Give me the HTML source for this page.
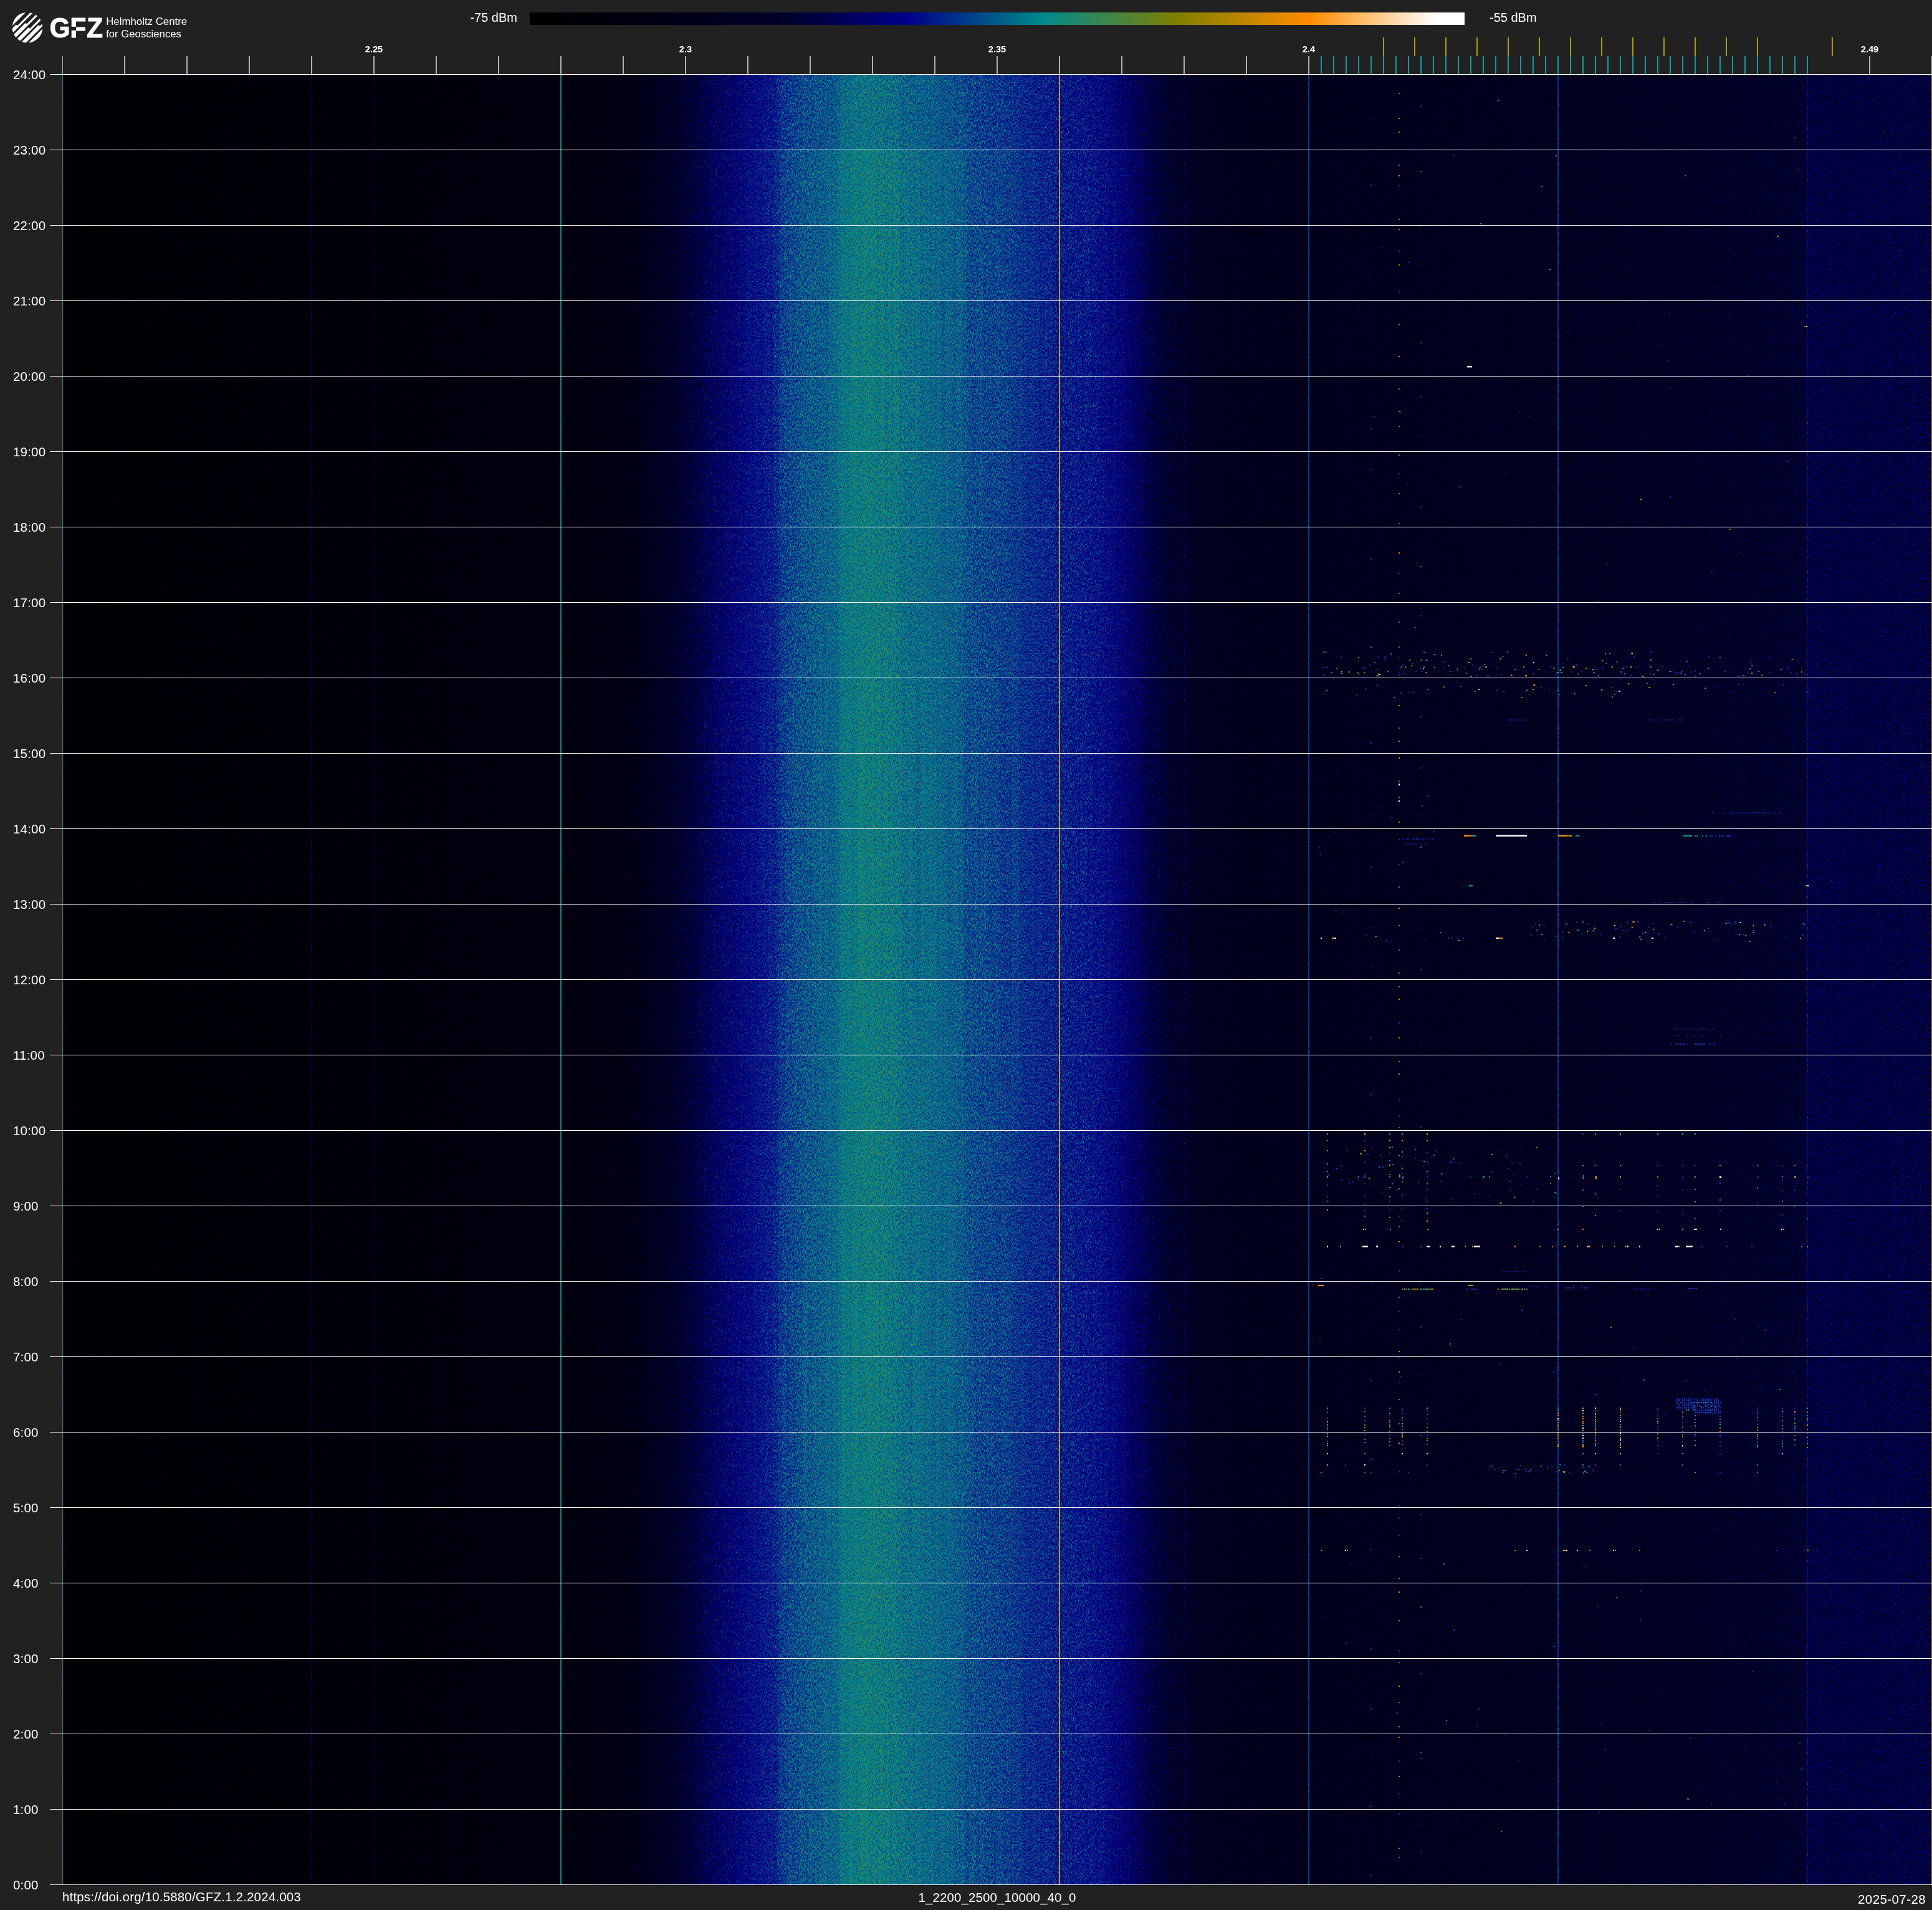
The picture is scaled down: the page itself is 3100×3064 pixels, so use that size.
<!DOCTYPE html>
<html lang="en"><head><meta charset="utf-8"><title>Spectrogram 2025-07-28</title>
<style>
html,body{margin:0;padding:0;background:#212121;}
body{width:3100px;height:3064px;position:relative;overflow:hidden;font-family:"Liberation Sans",sans-serif;color:#fff;}
.abs{position:absolute;}
.g{will-change:transform;}
.tl{will-change:transform;position:absolute;left:20.6px;font-size:20.5px;letter-spacing:0.2px;line-height:24px;height:24px;white-space:nowrap;}
.fl{will-change:transform;position:absolute;font-size:14.6px;font-weight:bold;line-height:16px;width:80px;text-align:center;top:70.7px;}
.hl{position:absolute;left:80px;width:3020px;height:1.5px;background:#fff;}
</style></head><body>
<svg class="abs g" style="left:0;top:0" width="320" height="90" viewBox="0 0 320 90">
<defs><clipPath id="lc"><circle cx="44" cy="44.1" r="24.4"/></clipPath></defs>
<g clip-path="url(#lc)" fill="#fff">
<path d="M0 0H60.99L0 60.99Z"/>
<path d="M-34.86 100.00 L25.62 39.52 L27.34 40.90 L28.45 40.49 L68.94 0.00 L73.30 0.00 L-26.70 100.00Z"/>
<path d="M-22.55 100.00 L40.39 37.06 L42.42 38.13 L43.85 37.40 L81.25 0.00 L85.61 0.00 L-14.39 100.00Z"/>
<path d="M-10.24 100.00 L45.42 44.34 L47.44 45.41 L48.87 44.69 L93.56 0.00 L97.92 0.00 L-2.08 100.00Z"/>
<path d="M2.07 100.00 L61.75 40.32 L63.62 41.55 L64.90 40.97 L105.87 0.00 L110.23 0.00 L10.23 100.00Z"/>
<path d="M14.38 100L100 14.38V100Z"/>
</g>
<text transform="translate(0,60.3) scale(0.915,0.9765)" x="87.2 123.1 152.3" y="0" font-family="Liberation Sans,sans-serif" font-weight="bold" font-size="46" fill="#fff" stroke="#fff" stroke-width="1.2">GFZ</text>
<rect x="113" y="42.9" width="9.0" height="5.9" fill="#212121"/>
<text x="170.2" y="40.4" font-family="Liberation Sans,sans-serif" font-size="16.5" fill="#fff" textLength="130" lengthAdjust="spacingAndGlyphs">Helmholtz Centre</text>
<text x="170.2" y="60" font-family="Liberation Sans,sans-serif" font-size="16.5" fill="#fff" textLength="120.7" lengthAdjust="spacingAndGlyphs">for Geosciences</text>
</svg>
<div class="abs" style="left:850px;top:20px;width:1500px;height:20px;background:linear-gradient(to right,rgb(0,0,0) 0.0%,rgb(0,0,40) 27.0%,rgb(0,0,139) 40.5%,rgb(0,139,139) 55.0%,rgb(128,128,0) 69.3%,rgb(255,140,0) 83.5%,rgb(255,255,255) 97.0%,rgb(255,255,255) 100.0%)"></div>
<div class="abs g" style="left:700px;top:16px;width:130px;text-align:right;font-size:20px;line-height:24px">-75 dBm</div>
<div class="abs g" style="left:2390px;top:16px;font-size:20px;line-height:24px">-55 dBm</div>
<div class="fl" style="left:560px">2.25</div>
<div class="fl" style="left:1060px">2.3</div>
<div class="fl" style="left:1560px">2.35</div>
<div class="fl" style="left:2060px">2.4</div>
<div class="fl" style="left:2960px">2.49</div>
<svg class="abs" style="left:100px;top:55px" width="3000" height="66" viewBox="100 55 3000 66">
<g stroke="#b0b0b0" stroke-width="2">
<path d="M100 90V119"/><path d="M200 90V119"/><path d="M300 90V119"/><path d="M400 90V119"/><path d="M500 90V119"/><path d="M600 90V119"/><path d="M700 90V119"/><path d="M800 90V119"/><path d="M900 90V119"/><path d="M1000 90V119"/><path d="M1100 90V119"/><path d="M1200 90V119"/><path d="M1300 90V119"/><path d="M1400 90V119"/><path d="M1500 90V119"/><path d="M1600 90V119"/><path d="M1700 90V119"/><path d="M1800 90V119"/><path d="M1900 90V119"/><path d="M2000 90V119"/><path d="M2100 90V119"/><path d="M2200 90V119"/><path d="M2300 90V119"/><path d="M2400 90V119"/><path d="M2500 90V119"/><path d="M2600 90V119"/><path d="M2700 90V119"/><path d="M2800 90V119"/><path d="M2900 90V119"/><path d="M3000 90V119"/><path d="M3100 90V119"/></g>
<g stroke="#0f9ba0" stroke-width="2">
<path d="M2120 90V119"/><path d="M2140 90V119"/><path d="M2160 90V119"/><path d="M2180 90V119"/><path d="M2200 90V119"/><path d="M2220 90V119"/><path d="M2240 90V119"/><path d="M2260 90V119"/><path d="M2280 90V119"/><path d="M2300 90V119"/><path d="M2320 90V119"/><path d="M2340 90V119"/><path d="M2360 90V119"/><path d="M2380 90V119"/><path d="M2400 90V119"/><path d="M2420 90V119"/><path d="M2440 90V119"/><path d="M2460 90V119"/><path d="M2480 90V119"/><path d="M2500 90V119"/><path d="M2520 90V119"/><path d="M2540 90V119"/><path d="M2560 90V119"/><path d="M2580 90V119"/><path d="M2600 90V119"/><path d="M2620 90V119"/><path d="M2640 90V119"/><path d="M2660 90V119"/><path d="M2680 90V119"/><path d="M2700 90V119"/><path d="M2720 90V119"/><path d="M2740 90V119"/><path d="M2760 90V119"/><path d="M2780 90V119"/><path d="M2800 90V119"/><path d="M2820 90V119"/><path d="M2840 90V119"/><path d="M2860 90V119"/><path d="M2880 90V119"/><path d="M2900 90V119"/></g>
<g stroke="#a59e0a" stroke-width="2">
<path d="M2220 60V90"/><path d="M2270 60V90"/><path d="M2320 60V90"/><path d="M2370 60V90"/><path d="M2420 60V90"/><path d="M2470 60V90"/><path d="M2520 60V90"/><path d="M2570 60V90"/><path d="M2620 60V90"/><path d="M2670 60V90"/><path d="M2720 60V90"/><path d="M2770 60V90"/><path d="M2820 60V90"/><path d="M2940 60V90"/></g></svg>
<svg class="abs" style="left:100px;top:120px" width="3000" height="2904" viewBox="0 0 3000 2904">
<defs>
<linearGradient id="pg" x1="0" y1="0" x2="3000" y2="0" gradientUnits="userSpaceOnUse" color-interpolation="sRGB">
<stop offset="0.00000" stop-color="rgb(8,8,8)"/><stop offset="0.06667" stop-color="rgb(13,13,13)"/><stop offset="0.13333" stop-color="rgb(18,18,18)"/><stop offset="0.20000" stop-color="rgb(23,23,23)"/><stop offset="0.26667" stop-color="rgb(28,28,28)"/><stop offset="0.28333" stop-color="rgb(31,31,31)"/><stop offset="0.30000" stop-color="rgb(36,36,36)"/><stop offset="0.31667" stop-color="rgb(52,52,52)"/><stop offset="0.33333" stop-color="rgb(71,71,71)"/><stop offset="0.35000" stop-color="rgb(89,89,89)"/><stop offset="0.36667" stop-color="rgb(102,102,102)"/><stop offset="0.38167" stop-color="rgb(112,112,112)"/><stop offset="0.38433" stop-color="rgb(119,119,119)"/><stop offset="0.39667" stop-color="rgb(126,126,126)"/><stop offset="0.41433" stop-color="rgb(132,132,132)"/><stop offset="0.41667" stop-color="rgb(137,137,137)"/><stop offset="0.43000" stop-color="rgb(141,141,141)"/><stop offset="0.44667" stop-color="rgb(138,138,138)"/><stop offset="0.44900" stop-color="rgb(135,135,135)"/><stop offset="0.46667" stop-color="rgb(132,132,132)"/><stop offset="0.48167" stop-color="rgb(128,128,128)"/><stop offset="0.48300" stop-color="rgb(125,125,125)"/><stop offset="0.50000" stop-color="rgb(121,121,121)"/><stop offset="0.51233" stop-color="rgb(118,118,118)"/><stop offset="0.51367" stop-color="rgb(116,116,116)"/><stop offset="0.53333" stop-color="rgb(111,111,111)"/><stop offset="0.55000" stop-color="rgb(107,107,107)"/><stop offset="0.55833" stop-color="rgb(103,103,103)"/><stop offset="0.56667" stop-color="rgb(96,96,96)"/><stop offset="0.57500" stop-color="rgb(87,87,87)"/><stop offset="0.58333" stop-color="rgb(76,76,76)"/><stop offset="0.59167" stop-color="rgb(68,68,68)"/><stop offset="0.60000" stop-color="rgb(60,60,60)"/><stop offset="0.61667" stop-color="rgb(52,52,52)"/><stop offset="0.63333" stop-color="rgb(48,48,48)"/><stop offset="0.66667" stop-color="rgb(48,48,48)"/><stop offset="0.73333" stop-color="rgb(51,51,51)"/><stop offset="0.80000" stop-color="rgb(54,54,54)"/><stop offset="0.86667" stop-color="rgb(59,59,59)"/><stop offset="0.91667" stop-color="rgb(66,66,66)"/><stop offset="0.93300" stop-color="rgb(67,67,67)"/><stop offset="0.93367" stop-color="rgb(77,77,77)"/><stop offset="1.00000" stop-color="rgb(77,77,77)"/>
</linearGradient>
<filter id="sf" x="0" y="0" width="3000" height="2904" filterUnits="userSpaceOnUse" color-interpolation-filters="sRGB">
<feTurbulence type="fractalNoise" baseFrequency="1.37 0.36" numOctaves="1" seed="7" result="t"/>
<feColorMatrix in="t" type="matrix" values="1 0 0 0 0 1 0 0 0 0 1 0 0 0 0 0 0 0 0 1" result="n0"/>
<feComponentTransfer in="n0" result="n"><feFuncR type="gamma" exponent="2"/><feFuncG type="gamma" exponent="2"/><feFuncB type="gamma" exponent="2"/></feComponentTransfer>
<feComposite in="SourceGraphic" in2="n" operator="arithmetic" k1="0" k2="1" k3="0.360" k4="-0.0939" result="s1"/>
<feTurbulence type="fractalNoise" baseFrequency="0.47 0.0012" numOctaves="1" seed="11" result="u"/>
<feColorMatrix in="u" type="matrix" values="1 0 0 0 0 1 0 0 0 0 1 0 0 0 0 0 0 0 0 1" result="u1"/>
<feComposite in="s1" in2="u1" operator="arithmetic" k1="0" k2="1" k3="0.050" k4="-0.0250" result="s"/>
<feComponentTransfer in="s"><feFuncR type="table" tableValues="0.0000 0.0000 0.0000 0.0000 0.0000 0.0000 0.0000 0.0000 0.0000 0.0000 0.0000 0.0000 0.0000 0.0000 0.0000 0.0000 0.0000 0.0000 0.0000 0.0000 0.0000 0.0000 0.0000 0.0878 0.1755 0.2633 0.3510 0.4388 0.5265 0.6142 0.7019 0.7896 0.8772 0.9649 1.0000 1.0000 1.0000 1.0000 1.0000 1.0000 1.0000"/><feFuncG type="table" tableValues="0.0000 0.0000 0.0000 0.0000 0.0000 0.0000 0.0000 0.0000 0.0000 0.0000 0.0000 0.0000 0.0000 0.0000 0.0000 0.0000 0.0000 0.0752 0.1692 0.2632 0.3571 0.4511 0.5451 0.5376 0.5300 0.5225 0.5149 0.5074 0.5043 0.5126 0.5209 0.5291 0.5374 0.5457 0.5991 0.6826 0.7662 0.8497 0.9332 1.0000 1.0000"/><feFuncB type="table" tableValues="0.0000 0.0145 0.0290 0.0436 0.0581 0.0726 0.0871 0.1017 0.1162 0.1307 0.1452 0.1712 0.2431 0.3150 0.3869 0.4588 0.5307 0.5451 0.5451 0.5451 0.5451 0.5451 0.5451 0.4498 0.3545 0.2592 0.1639 0.0686 0.0000 0.0000 0.0000 0.0000 0.0000 0.0000 0.1111 0.2963 0.4815 0.6667 0.8519 1.0000 1.0000"/></feComponentTransfer>
</filter>
</defs>
<g filter="url(#sf)"><rect x="0" y="0" width="3000" height="2904" fill="url(#pg)"/>
<rect x="0" y="0" width="3000" height="120" fill="#000" opacity="0.022"/>
<rect x="-1.0" y="0" width="2.0" height="2904" fill="rgb(145,145,145)" opacity="1.00"/>
<rect x="399.3" y="0" width="1.4" height="2904" fill="rgb(102,102,102)" opacity="1.00"/>
<rect x="499.3" y="0" width="1.4" height="2904" fill="rgb(76,76,76)" opacity="1.00"/>
<rect x="799.0" y="0" width="2.0" height="2904" fill="rgb(144,144,144)" opacity="1.00"/>
<rect x="1599.0" y="0" width="1.9" height="2904" fill="rgb(204,204,204)" opacity="1.00"/>
<rect x="1799.5" y="0" width="1.0" height="2904" fill="rgb(102,102,102)" opacity="1.00"/>
<rect x="1999.0" y="0" width="2.0" height="2904" fill="rgb(120,120,120)" opacity="1.00"/>
<rect x="2399.0" y="0" width="2.0" height="2904" fill="rgb(119,119,119)" opacity="1.00"/>
<rect x="2799.2" y="0" width="1.6" height="2904" fill="rgb(105,105,105)" opacity="1.00"/>
<rect x="2999.0" y="0" width="2.0" height="2904" fill="rgb(184,184,184)" opacity="1.00"/>
</g>
<rect x="-1.00" y="0" width="2.0" height="2904" fill="rgb(17,137,119)" opacity="0.70"/>
<rect x="799.00" y="0" width="2.0" height="2904" fill="rgb(17,137,119)" opacity="0.70"/>
<rect x="1599.05" y="0" width="1.9" height="2904" fill="rgb(223,137,0)" opacity="0.70"/>
<rect x="1999.00" y="0" width="2.0" height="2904" fill="rgb(0,62,139)" opacity="0.45"/>
<rect x="2399.00" y="0" width="2.0" height="2904" fill="rgb(0,57,139)" opacity="0.45"/>
<rect x="2300.0" y="1219.5" width="50.0" height="2.4" fill="#ffffff"/><rect x="2249.0" y="1219.5" width="9.0" height="2.4" fill="#ff8a10"/><rect x="2258.0" y="1219.5" width="5.0" height="2.4" fill="#9a9212"/><rect x="2263.0" y="1219.5" width="6.0" height="2.4" fill="#0f9494"/><rect x="2400.0" y="1219.5" width="14.0" height="2.4" fill="#ff8a10"/><rect x="2414.0" y="1219.5" width="9.0" height="2.4" fill="#9a9212"/><rect x="2428.0" y="1219.5" width="6.0" height="2.4" fill="#0f9494"/><rect x="2601.0" y="1219.5" width="12.0" height="2.4" fill="#0f9494"/><rect x="2144.0" y="1137.0" width="2.0" height="3.0" fill="#ffffff"/><rect x="2029.0" y="1698.0" width="2.0" height="3.0" fill="#0f9494"/><rect x="2089.0" y="1698.0" width="2.0" height="3.0" fill="#ff8a10"/><rect x="2129.0" y="1698.0" width="2.0" height="3.0" fill="#0f9494"/><rect x="2149.0" y="1698.0" width="2.0" height="3.0" fill="#0f9494"/><rect x="2189.0" y="1698.0" width="2.0" height="3.0" fill="#9a9212"/><rect x="2439.0" y="1698.0" width="2.0" height="3.0" fill="#1634b4"/><rect x="2459.0" y="1698.0" width="2.0" height="3.0" fill="#0f9494"/><rect x="2499.0" y="1698.0" width="2.0" height="3.0" fill="#9a9212"/><rect x="2559.0" y="1698.0" width="2.0" height="3.0" fill="#0f9494"/><rect x="2599.0" y="1698.0" width="2.0" height="3.0" fill="#0f9494"/><rect x="2619.0" y="1698.0" width="2.0" height="3.0" fill="#0f9494"/><rect x="2089.0" y="1767.0" width="2.0" height="3.0" fill="#1634b4"/><rect x="2499.0" y="1767.0" width="2.0" height="3.0" fill="#9a9212"/><rect x="2619.0" y="1767.0" width="2.0" height="3.0" fill="#0f9494"/><rect x="2659.0" y="1767.0" width="3.0" height="3.0" fill="#ffffff"/><rect x="2779.0" y="1767.0" width="3.0" height="3.0" fill="#9a9212"/><rect x="2799.0" y="1767.0" width="3.0" height="3.0" fill="#1634b4"/><rect x="2279.0" y="1767.0" width="3.0" height="3.0" fill="#0f9494"/><rect x="2400.0" y="1768.0" width="2.0" height="4.0" fill="#ffffff"/><rect x="2460.0" y="1767.0" width="2.0" height="5.0" fill="#ff8a10"/><rect x="2440.0" y="1765.0" width="2.0" height="6.0" fill="#0f9494"/><rect x="2145.0" y="1764.0" width="2.0" height="5.0" fill="#9a9212"/><rect x="2150.0" y="1766.0" width="2.0" height="5.0" fill="#0f9494"/><rect x="2029.0" y="1878.5" width="2.0" height="2.4" fill="#ffffff"/><rect x="2050.0" y="1878.5" width="2.0" height="2.4" fill="#9a9212"/><rect x="2086.0" y="1878.5" width="9.0" height="2.4" fill="#ffffff"/><rect x="2108.0" y="1878.5" width="3.0" height="2.4" fill="#ffffff"/><rect x="2150.0" y="1878.5" width="2.0" height="2.4" fill="#1634b4"/><rect x="2189.0" y="1878.5" width="6.0" height="2.4" fill="#ffffff"/><rect x="2210.0" y="1878.5" width="2.0" height="2.4" fill="#ffffff"/><rect x="2229.0" y="1878.5" width="5.0" height="2.4" fill="#ffffff"/><rect x="2250.0" y="1878.5" width="2.0" height="2.4" fill="#9a9212"/><rect x="2262.0" y="1878.5" width="2.0" height="2.4" fill="#ff8a10"/><rect x="2265.0" y="1878.5" width="10.0" height="2.4" fill="#ffffff"/><rect x="2330.0" y="1878.5" width="2.0" height="2.4" fill="#ff8a10"/><rect x="2370.0" y="1878.5" width="2.0" height="2.4" fill="#9a9212"/><rect x="2390.0" y="1878.5" width="2.0" height="2.4" fill="#9a9212"/><rect x="2409.0" y="1878.5" width="3.0" height="2.4" fill="#ff8a10"/><rect x="2430.0" y="1878.5" width="2.0" height="2.4" fill="#9a9212"/><rect x="2447.0" y="1878.5" width="2.0" height="2.4" fill="#ffffff"/><rect x="2450.0" y="1878.5" width="2.0" height="2.4" fill="#ff8a10"/><rect x="2470.0" y="1878.5" width="2.0" height="2.4" fill="#9a9212"/><rect x="2490.0" y="1878.5" width="2.0" height="2.4" fill="#9a9212"/><rect x="2507.0" y="1878.5" width="2.0" height="2.4" fill="#ff8a10"/><rect x="2510.0" y="1878.5" width="3.0" height="2.4" fill="#ffffff"/><rect x="2530.0" y="1878.5" width="2.0" height="2.4" fill="#ffffff"/><rect x="2588.0" y="1878.5" width="5.0" height="2.4" fill="#ffffff"/><rect x="2593.0" y="1878.5" width="2.0" height="2.4" fill="#ff8a10"/><rect x="2605.0" y="1878.5" width="11.0" height="2.4" fill="#ffffff"/><rect x="2630.0" y="1878.5" width="2.0" height="2.4" fill="#1634b4"/><rect x="2670.0" y="1878.5" width="2.0" height="2.4" fill="#1634b4"/><rect x="2710.0" y="1878.5" width="2.0" height="2.4" fill="#1634b4"/><rect x="2790.0" y="1878.5" width="2.0" height="2.4" fill="#0f9494"/><rect x="2799.0" y="1878.5" width="2.0" height="2.4" fill="#9a9212"/><rect x="2254.0" y="467.0" width="8.0" height="2.4" fill="#ffffff"/><path stroke="#ffffff" stroke-width="1.8" fill="none" d="M2424.3 949.0h2.0M2517.7 928.0h2.0M2360.0 943.0h2.0M2112.8 962.0h2.0M2272.3 986.0h2.0M2497.3 989.0h2.0M2144.0 1165.0h2.0M2800.0 1301.0h2.0M2489.9 1365.0h2.0M2691.6 1360.0h2.0M2019.0 1385.0h2.0M2041.0 1385.0h3.0M2300.0 1385.0h5.0M2488.0 1385.0h3.0M2550.0 1385.0h3.0M2087.0 1852.0h2.0M2559.0 1852.0h2.0M2618.0 1852.0h5.0M2660.0 1852.0h2.0M2758.0 1852.0h2.0M2399.0 2156.0h2.0M2439.0 2143.0h2.0M2439.0 2171.0h2.0M2439.0 2183.0h2.0M2439.0 2187.0h2.0M2459.0 2139.0h2.0M2499.0 2160.0h2.0M2499.0 2179.0h2.0M2499.0 2190.0h2.0M2499.0 2202.0h2.0M2459.0 2199.0h2.0M2599.0 2199.0h2.0M2619.0 2199.0h2.0M2029.0 2212.0h2.0M2149.0 2212.0h2.0M2189.0 2212.0h2.0M2459.0 2212.0h2.0M2499.0 2212.0h2.0M2759.0 2212.0h2.0M2089.0 2230.0h2.0M2058.0 2367.0h2.0M2349.0 2367.0h2.0M2413.0 2367.0h2.0M2430.0 2367.0h2.0M2488.0 2367.0h2.0M2798.0 404.0h2.0"/>
<path stroke="#ff8a10" stroke-width="1.8" fill="none" d="M2144.0 70.0h2.0M2144.0 162.0h2.0M2144.0 452.0h2.0M2144.0 767.0h2.0M2144.0 1012.0h2.0M2144.0 1096.0h2.0M2144.0 1337.0h2.0M2144.0 1483.0h2.0M2144.0 1872.0h2.0M2144.0 2048.0h2.0M2144.0 2195.0h2.0M2144.0 2434.0h2.0M2144.0 2585.0h2.0M2144.0 2667.0h2.0M2516.2 950.0h2.0M2347.8 931.0h2.0M2535.2 965.0h2.0M2324.5 963.0h2.0M2187.5 959.0h2.0M2259.6 965.0h2.0M2346.9 964.0h3.0M2485.8 950.0h2.0M2710.0 960.0h2.0M2423.5 950.0h3.0M2238.0 953.0h2.0M2512.4 977.0h2.0M2469.2 987.0h2.0M2360.4 979.0h3.0M2359.2 986.0h2.0M2446.2 1374.0h2.0M2552.2 1371.0h2.0M2730.4 1364.0h2.0M2517.8 1368.0h2.0M2416.5 1376.0h2.0M2712.5 1365.0h2.0M2519.3 1359.0h2.0M2037.0 1385.0h3.0M2305.0 1385.0h6.0M2029.0 1821.0h2.0M2089.0 1726.0h2.0M2129.0 1710.0h2.0M2129.0 1721.0h2.0M2129.0 1749.0h2.0M2149.0 1710.0h2.0M2189.0 1839.0h2.0M2090.0 1852.0h2.0M2190.0 1852.0h2.0M2399.0 1852.0h2.0M2439.0 1852.0h2.0M2562.0 1852.0h2.0M2599.0 1852.0h2.0M2761.0 1852.0h2.0M2015.0 1942.0h9.0M2029.0 2161.0h2.0M2029.0 2184.0h2.0M2129.0 2159.0h2.0M2149.0 2164.0h2.0M2149.0 2185.0h2.0M2399.0 2147.0h2.0M2399.0 2151.0h2.0M2399.0 2162.0h2.0M2399.0 2173.0h2.0M2399.0 2178.0h2.0M2399.0 2188.0h2.0M2399.0 2197.0h2.0M2399.0 2200.0h2.0M2439.0 2139.0h2.0M2439.0 2156.0h2.0M2439.0 2161.0h2.0M2439.0 2164.0h2.0M2439.0 2175.0h2.0M2439.0 2201.0h2.0M2459.0 2149.0h2.0M2459.0 2157.0h2.0M2459.0 2160.0h2.0M2459.0 2172.0h2.0M2459.0 2175.0h2.0M2499.0 2139.0h2.0M2499.0 2142.0h2.0M2499.0 2169.0h2.0M2499.0 2183.0h2.0M2499.0 2198.0h2.0M2559.0 2160.0h2.0M2659.0 2177.0h2.0M2759.0 2144.0h2.0M2779.0 2145.0h2.0M2799.0 2166.0h2.0M2439.0 2199.0h2.0M2499.0 2199.0h2.0M2599.0 2212.0h2.0M2029.0 2230.0h2.0M2408.0 2367.0h5.0M2491.0 2367.0h2.0"/>
<path stroke="#9a9212" stroke-width="1.8" fill="none" d="M2144.0 92.0h2.0M2144.0 232.0h2.0M2144.0 248.0h2.0M2144.0 305.0h2.0M2144.0 540.0h2.0M2144.0 564.0h2.0M2144.0 672.0h2.0M2144.0 1069.0h2.0M2144.0 1159.0h2.0M2144.0 1199.0h2.0M2144.0 1365.0h2.0M2144.0 1463.0h2.0M2144.0 1545.0h2.0M2144.0 1583.0h2.0M2144.0 1603.0h2.0M2144.0 1734.0h2.0M2144.0 1787.0h2.0M2144.0 2081.0h2.0M2144.0 2377.0h2.0M2144.0 2412.0h2.0M2144.0 2480.0h2.0M2144.0 2650.0h2.0M2144.0 2730.0h2.0M2144.0 2845.0h2.0M2255.9 943.0h3.0M2774.8 938.0h2.0M2380.6 931.0h2.0M2161.3 939.0h2.0M2201.1 930.0h2.0M2547.2 939.0h3.0M2164.4 948.0h2.0M2443.9 952.0h2.0M2470.2 940.0h2.0M2079.2 935.0h2.0M2023.5 926.0h2.0M2282.8 950.0h3.0M2126.2 957.0h2.0M2088.5 959.0h2.0M2200.9 951.0h2.0M2456.6 959.0h2.0M2402.4 955.0h3.0M2154.2 950.0h2.0M2392.4 952.0h2.0M2343.8 950.0h2.0M2110.7 961.0h2.0M2051.1 960.0h3.0M2063.7 958.0h2.0M2052.0 957.0h2.0M2110.5 964.0h2.0M2790.0 958.0h2.0M2747.3 991.0h2.0M2545.3 983.0h3.0M2215.7 982.0h2.0M2583.9 978.0h2.0M2341.0 999.0h2.0M2443.6 980.0h3.0M2797.0 1301.0h2.0M2369.3 1364.0h2.0M2633.9 1373.0h2.0M2539.5 1376.0h2.0M2521.6 1359.0h2.0M2601.1 1358.0h2.0M2706.8 1390.0h2.0M2700.3 1381.0h2.0M2788.0 1385.0h2.0M2029.0 1726.0h2.0M2129.0 1785.0h2.0M2129.0 1800.0h2.0M2129.0 1833.0h2.0M2149.0 1728.0h2.0M2149.0 1754.0h2.0M2189.0 1710.0h2.0M2189.0 1826.0h2.0M2439.0 1750.0h2.0M2439.0 1815.0h2.0M2459.0 1768.0h2.0M2459.0 1830.0h2.0M2499.0 1750.0h2.0M2619.0 1788.0h2.0M2619.0 1808.0h2.0M2659.0 1750.0h2.0M2365.0 1721.0h2.0M2387.0 1778.0h2.0M2306.5 1810.0h3.0M2082.0 1731.0h3.0M2095.9 1770.0h2.0M2029.0 1768.0h2.0M2559.0 1768.0h2.0M2256.0 1942.0h8.0M2150.0 1948.0h2.0M2153.0 1948.0h2.0M2156.0 1948.0h2.0M2159.0 1948.0h2.0M2165.0 1948.0h2.0M2168.0 1948.0h2.0M2171.0 1948.0h2.0M2174.0 1948.0h2.0M2180.0 1948.0h2.0M2183.0 1948.0h2.0M2189.0 1948.0h2.0M2192.0 1948.0h2.0M2195.0 1948.0h2.0M2198.0 1948.0h2.0M2303.0 1948.0h2.0M2309.0 1948.0h2.0M2312.0 1948.0h2.0M2315.0 1948.0h2.0M2318.0 1948.0h2.0M2321.0 1948.0h2.0M2324.0 1948.0h2.0M2327.0 1948.0h2.0M2330.0 1948.0h2.0M2333.0 1948.0h2.0M2336.0 1948.0h2.0M2342.0 1948.0h2.0M2345.0 1948.0h2.0M2348.0 1948.0h2.0M2029.0 2139.0h2.0M2029.0 2166.0h2.0M2029.0 2171.0h2.0M2029.0 2196.0h2.0M2089.0 2166.0h2.0M2089.0 2170.0h2.0M2089.0 2175.0h2.0M2129.0 2147.0h2.0M2129.0 2169.0h2.0M2129.0 2193.0h2.0M2149.0 2168.0h2.0M2149.0 2182.0h2.0M2189.0 2139.0h2.0M2189.0 2170.0h2.0M2189.0 2188.0h2.0M2399.0 2166.0h2.0M2399.0 2169.0h2.0M2399.0 2181.0h2.0M2399.0 2184.0h2.0M2439.0 2147.0h2.0M2439.0 2152.0h2.0M2439.0 2167.0h2.0M2439.0 2197.0h2.0M2459.0 2153.0h2.0M2459.0 2179.0h2.0M2459.0 2183.0h2.0M2459.0 2191.0h2.0M2499.0 2151.0h2.0M2499.0 2154.0h2.0M2499.0 2157.0h2.0M2499.0 2187.0h2.0M2499.0 2195.0h2.0M2559.0 2180.0h2.0M2559.0 2187.0h2.0M2599.0 2185.0h2.0M2619.0 2167.0h2.0M2659.0 2171.0h2.0M2719.0 2170.0h2.0M2719.0 2174.0h2.0M2719.0 2181.0h2.0M2719.0 2184.0h2.0M2779.0 2163.0h2.0M2799.0 2173.0h2.0M2799.0 2186.0h2.0M2799.0 2202.0h2.0M2029.0 2199.0h2.0M2399.0 2199.0h2.0M2439.0 2212.0h2.0M2407.5 2241.0h3.0M2400.8 2239.0h2.0M2409.0 2242.0h2.0M2619.0 2242.0h2.0M2019.0 2367.0h2.0M2061.0 2367.0h2.0M2330.0 2367.0h2.0M2450.0 2367.0h2.0M2530.0 2367.0h2.0M2800.0 2367.0h2.0M2795.0 404.0h2.0M2531.7 681.0h3.0M2395.9 130.0h2.0M2674.8 729.0h2.0M2275.1 239.0h2.0M2751.0 259.0h3.0M2484.2 2009.0h2.0M2755.6 2109.0h2.0"/>
<path stroke="#38a878" stroke-width="1.8" fill="none" d="M2179.4 939.0h2.0M2212.1 931.0h2.0M2482.3 928.0h2.0M2184.1 950.0h2.0M2306.1 937.0h3.0M2183.0 953.0h2.0M2454.7 954.0h3.0M2726.4 963.0h2.0M2707.2 953.0h2.0M2035.5 959.0h2.0M2578.5 957.0h3.0M2398.2 959.0h3.0M2136.5 999.0h2.0M2635.4 984.0h2.0M2349.0 987.0h2.0M2400.4 994.0h2.0M2690.1 1379.0h2.0M2712.4 1376.0h2.0M2580.5 1363.0h3.0M2240.0 1389.0h3.0M2530.3 1383.0h2.0M2210.4 1376.0h2.0M2459.0 1768.0h2.0M2130.0 1852.0h2.0"/>
<path stroke="#0f9494" stroke-width="1.8" fill="none" d="M2144.0 30.0h2.0M2144.0 145.0h2.0M2144.0 401.0h2.0M2144.0 504.0h2.0M2144.0 610.0h2.0M2144.0 720.0h2.0M2144.0 832.0h2.0M2144.0 878.0h2.0M2144.0 918.0h2.0M2144.0 1048.0h2.0M2144.0 1133.0h2.0M2144.0 1303.0h2.0M2144.0 1404.0h2.0M2144.0 1441.0h2.0M2144.0 1689.0h2.0M2144.0 1848.0h2.0M2144.0 1961.0h2.0M2144.0 2125.0h2.0M2144.0 2164.0h2.0M2144.0 2547.0h2.0M2144.0 2611.0h2.0M2144.0 2860.0h2.0M2099.0 918.0h2.0M2179.0 155.0h2.0M2179.0 242.0h2.0M2179.0 789.0h2.0M2179.0 1239.0h2.0M2179.0 2458.0h2.0M2658.8 935.0h2.0M2475.0 929.0h2.0M2223.5 948.0h2.0M2184.6 927.0h2.0M2639.9 952.0h2.0M2605.6 941.0h2.0M2259.3 937.0h2.0M2105.4 943.0h2.0M2547.0 950.0h3.0M2273.8 951.0h2.0M2710.2 948.0h2.0M2318.3 926.0h2.0M2476.4 944.0h2.0M2280.8 946.0h2.0M2493.5 942.0h2.0M2131.1 929.0h2.0M2187.5 939.0h3.0M2310.3 933.0h2.0M2330.1 954.0h2.0M2558.6 955.0h3.0M2406.5 951.0h3.0M2696.9 964.0h2.0M2252.3 960.0h2.0M2504.4 952.0h2.0M2272.7 954.0h2.0M2721.2 957.0h2.0M2506.1 961.0h2.0M2043.9 952.0h2.0M2368.5 954.0h2.0M2603.2 962.0h2.0M2626.9 961.0h2.0M2552.3 962.0h2.0M2077.4 959.0h2.0M2596.8 960.0h2.0M2147.4 950.0h2.0M2431.7 961.0h2.0M2500.8 958.0h2.0M2404.2 959.0h3.0M2079.3 961.0h2.0M2108.4 964.0h2.0M2464.0 964.0h2.0M2756.8 954.0h2.0M2486.0 998.0h2.0M2243.4 981.0h2.0M2027.9 988.0h2.0M2266.1 989.0h2.0M2190.7 986.0h2.0M2489.7 994.0h2.0M2542.4 976.0h2.0M2425.5 993.0h2.0M2399.4 987.0h2.0M2613.0 1221.0h2.0M2619.0 1221.0h2.0M2622.0 1221.0h2.0M2631.0 1221.0h2.0M2637.0 1221.0h2.0M2257.0 1301.0h6.0M2372.1 1379.0h3.0M2430.7 1372.0h3.0M2365.4 1372.0h2.0M2668.4 1361.0h3.0M2438.9 1359.0h2.0M2457.7 1369.0h3.0M2713.1 1373.0h2.0M2412.5 1362.0h2.0M2792.6 1362.0h2.0M2456.0 1373.0h2.0M2531.6 1387.0h3.0M2106.1 1382.0h3.0M2029.0 1710.0h2.0M2029.0 1747.0h2.0M2029.0 1759.0h2.0M2029.0 1769.0h2.0M2089.0 1831.0h2.0M2129.0 1742.0h2.0M2129.0 1764.0h2.0M2149.0 1776.0h2.0M2189.0 1759.0h2.0M2189.0 1779.0h2.0M2439.0 1789.0h2.0M2459.0 1750.0h2.0M2459.0 1795.0h2.0M2619.0 1835.0h2.0M2659.0 1805.0h2.0M2719.0 1750.0h2.0M2719.0 1786.0h2.0M2759.0 1807.0h2.0M2779.0 1750.0h2.0M2170.4 1724.0h2.0M2387.2 1767.0h2.0M2328.9 1801.0h2.0M2231.5 1739.0h2.0M2183.8 1743.0h3.0M2134.1 1748.0h2.0M2112.5 1752.0h2.0M2394.3 1793.0h3.0M2132.9 1720.0h2.0M2133.4 1779.0h2.0M2292.3 1732.0h3.0M2212.4 1763.0h2.0M2029.5 1807.0h2.0M2200.2 1733.0h2.0M2129.0 1768.0h2.0M2439.0 1768.0h2.0M2759.0 1768.0h2.0M2079.0 1768.0h2.0M2289.0 1768.0h2.0M2160.0 1948.0h2.0M2178.0 1948.0h2.0M2184.0 1948.0h2.0M2187.0 1948.0h2.0M2196.0 1948.0h2.0M2313.0 1948.0h2.0M2316.0 1948.0h2.0M2325.0 1948.0h2.0M2334.0 1948.0h2.0M2340.0 1948.0h2.0M2349.0 1948.0h2.0M2029.0 2180.0h2.0M2089.0 2144.0h2.0M2089.0 2152.0h2.0M2089.0 2189.0h2.0M2089.0 2194.0h2.0M2129.0 2139.0h2.0M2129.0 2162.0h2.0M2129.0 2166.0h2.0M2129.0 2176.0h2.0M2129.0 2188.0h2.0M2149.0 2154.0h2.0M2149.0 2179.0h2.0M2149.0 2197.0h2.0M2189.0 2176.0h2.0M2189.0 2191.0h2.0M2399.0 2139.0h2.0M2399.0 2142.0h2.0M2399.0 2159.0h2.0M2399.0 2193.0h2.0M2439.0 2180.0h2.0M2439.0 2191.0h2.0M2439.0 2194.0h2.0M2459.0 2143.0h2.0M2459.0 2147.0h2.0M2459.0 2163.0h2.0M2459.0 2166.0h2.0M2459.0 2169.0h2.0M2459.0 2187.0h2.0M2459.0 2195.0h2.0M2459.0 2198.0h2.0M2499.0 2146.0h2.0M2499.0 2165.0h2.0M2499.0 2174.0h2.0M2559.0 2156.0h2.0M2559.0 2163.0h2.0M2599.0 2145.0h2.0M2599.0 2152.0h2.0M2599.0 2170.0h2.0M2599.0 2177.0h2.0M2599.0 2181.0h2.0M2599.0 2200.0h2.0M2619.0 2151.0h2.0M2619.0 2157.0h2.0M2619.0 2162.0h2.0M2619.0 2181.0h2.0M2619.0 2191.0h2.0M2659.0 2157.0h2.0M2659.0 2162.0h2.0M2659.0 2165.0h2.0M2719.0 2154.0h2.0M2719.0 2188.0h2.0M2719.0 2201.0h2.0M2759.0 2159.0h2.0M2759.0 2167.0h2.0M2759.0 2172.0h2.0M2759.0 2177.0h2.0M2759.0 2192.0h2.0M2759.0 2196.0h2.0M2759.0 2200.0h2.0M2779.0 2156.0h2.0M2779.0 2168.0h2.0M2779.0 2172.0h2.0M2779.0 2183.0h2.0M2779.0 2190.0h2.0M2799.0 2139.0h2.0M2799.0 2146.0h2.0M2799.0 2151.0h2.0M2799.0 2155.0h2.0M2799.0 2158.0h2.0M2799.0 2195.0h2.0M2612.0 2130.0h2.0M2615.0 2130.0h2.0M2621.0 2130.0h2.0M2624.0 2130.0h2.0M2633.0 2130.0h2.0M2636.0 2130.0h2.0M2639.0 2130.0h2.0M2645.0 2130.0h2.0M2618.0 2136.0h2.0M2627.0 2136.0h2.0M2636.0 2136.0h2.0M2645.0 2136.0h2.0M2651.0 2136.0h2.0M2657.0 2136.0h2.0M2605.0 2142.0h2.0M2608.0 2142.0h2.0M2617.0 2142.0h2.0M2632.0 2142.0h2.0M2635.0 2142.0h2.0M2641.0 2142.0h2.0M2644.0 2142.0h2.0M2650.0 2142.0h2.0M2653.0 2142.0h2.0M2129.0 2199.0h2.0M2659.0 2199.0h2.0M2719.0 2199.0h2.0M2089.0 2212.0h2.0M2439.0 2230.0h2.0M2499.0 2230.0h2.0M2599.0 2230.0h2.0M2719.0 2230.0h2.0M2355.2 2238.0h2.0M2402.2 2230.0h2.0M2330.9 2244.0h2.0M2445.2 2242.0h2.0M2371.5 2232.0h2.0M2311.5 2239.0h3.0M2439.8 2243.0h2.0M2441.7 2240.0h3.0M2019.0 2242.0h2.0M2089.0 2242.0h2.0M2719.0 2242.0h2.0M2169.5 887.0h2.0M2145.5 540.0h2.0M2303.2 41.0h2.0M2603.5 162.0h2.0M2372.8 179.0h2.0M2385.4 312.0h3.0M2607.2 2766.0h3.0M2178.7 2691.0h2.0M2493.2 2443.0h2.0M2216.1 2389.0h2.0M2308.3 2818.0h2.0M2219.9 2640.0h2.0M2226.1 2036.0h2.0M2537.2 2094.0h2.0"/>
<path stroke="#1634b4" stroke-width="1.8" fill="none" d="M2144.0 178.0h2.0M2144.0 283.0h2.0M2144.0 348.0h2.0M2144.0 640.0h2.0M2144.0 800.0h2.0M2144.0 963.0h2.0M2144.0 1227.0h2.0M2144.0 1267.0h2.0M2144.0 1521.0h2.0M2144.0 1645.0h2.0M2144.0 1670.0h2.0M2144.0 1831.0h2.0M2144.0 1919.0h2.0M2144.0 1984.0h2.0M2144.0 2013.0h2.0M2144.0 2098.0h2.0M2144.0 2241.0h2.0M2144.0 2295.0h2.0M2144.0 2315.0h2.0M2144.0 2343.0h2.0M2144.0 2528.0h2.0M2144.0 2705.0h2.0M2144.0 2757.0h2.0M2144.0 2790.0h2.0M2099.0 177.0h2.0M2099.0 568.0h2.0M2099.0 633.0h2.0M2099.0 777.0h2.0M2099.0 1072.0h2.0M2099.0 1271.0h2.0M2099.0 1545.0h2.0M2099.0 1636.0h2.0M2099.0 2095.0h2.0M2099.0 2221.0h2.0M2099.0 2366.0h2.0M2099.0 2525.0h2.0M2099.0 2621.0h2.0M2099.0 2778.0h2.0M2099.0 2888.0h2.0M2179.0 50.0h2.0M2179.0 430.0h2.0M2179.0 517.0h2.0M2179.0 693.0h2.0M2179.0 868.0h2.0M2179.0 953.0h2.0M2179.0 1030.0h2.0M2179.0 1112.0h2.0M2179.0 1435.0h2.0M2179.0 1688.0h2.0M2179.0 1880.0h2.0M2179.0 2009.0h2.0M2179.0 2182.0h2.0M2179.0 2310.0h2.0M2179.0 2380.0h2.0M2179.0 2565.0h2.0M2179.0 2701.0h2.0M2708.1 943.0h2.0M2216.6 942.0h2.0M2261.6 947.0h2.0M2120.7 934.0h2.0M2641.4 934.0h2.0M2548.6 940.0h2.0M2051.0 933.0h2.0M2521.1 934.0h2.0M2097.4 947.0h2.0M2143.1 936.0h2.0M2548.2 926.0h2.0M2183.4 927.0h2.0M2026.3 927.0h3.0M2278.5 949.0h2.0M2414.6 936.0h2.0M2165.5 944.0h2.0M2110.3 934.0h2.0M2428.3 947.0h3.0M2121.9 937.0h2.0M2150.4 947.0h2.0M2027.5 926.0h2.0M2293.2 927.0h2.0M2151.0 961.0h2.0M2502.0 952.0h2.0M2619.2 965.0h2.0M2359.3 961.0h2.0M2023.3 963.0h2.0M2597.0 957.0h3.0M2109.8 954.0h2.0M2022.6 951.0h2.0M2028.4 950.0h2.0M2588.9 960.0h2.0M2248.5 951.0h2.0M2781.9 961.0h2.0M2180.6 957.0h2.0M2688.0 965.0h2.0M2591.6 959.0h2.0M2222.3 962.0h2.0M2421.2 958.0h2.0M2772.9 959.0h2.0M2612.7 958.0h2.0M2276.7 954.0h2.0M2470.2 952.0h2.0M2510.0 950.0h2.0M2237.2 956.0h2.0M2526.3 950.0h2.0M2667.1 957.0h2.0M2307.6 962.0h2.0M2171.1 957.0h2.0M2619.5 957.0h2.0M2516.5 963.0h2.0M2793.8 961.0h2.0M2595.4 959.0h2.0M2284.8 964.0h2.0M2023.4 962.0h2.0M2288.2 964.0h2.0M2396.5 960.0h2.0M2436.6 957.0h2.0M2301.7 952.0h2.0M2269.3 963.0h2.0M2226.5 957.0h3.0M2739.2 959.0h2.0M2566.3 950.0h2.0M2693.3 964.0h2.0M2547.9 961.0h2.0M2460.5 954.0h2.0M2767.1 951.0h2.0M2086.9 952.0h3.0M2703.5 959.0h2.0M2688.5 978.0h2.0M2090.4 985.0h2.0M2492.5 989.0h2.0M2301.3 987.0h2.0M2109.1 980.0h2.0M2385.0 986.0h2.0M2486.4 983.0h2.0M2797.6 990.0h2.0M2498.8 988.0h2.0M2146.9 992.0h3.0M2372.1 983.0h2.0M2312.1 989.0h2.0M2166.3 991.0h3.0M2760.3 979.0h2.0M2076.5 996.0h2.0M2643.0 1221.0h2.0M2646.0 1221.0h2.0M2652.0 1221.0h2.0M2658.0 1221.0h2.0M2661.0 1221.0h2.0M2664.0 1221.0h2.0M2670.0 1221.0h2.0M2673.0 1221.0h2.0M2676.0 1221.0h2.0M2189.3 1156.0h2.0M2149.3 1264.0h3.0M2017.4 1250.0h2.0M2180.3 1173.0h3.0M2015.6 1239.0h2.0M2171.8 1225.0h3.0M2199.9 1214.0h2.0M2132.4 1192.0h2.0M2178.9 1234.0h3.0M2544.4 1368.0h2.0M2673.8 1361.0h3.0M2740.1 1366.0h2.0M2447.5 1362.0h2.0M2362.6 1362.0h2.0M2491.7 1370.0h3.0M2682.6 1362.0h2.0M2504.5 1373.0h2.0M2591.4 1367.0h2.0M2673.2 1360.0h2.0M2500.1 1366.0h2.0M2640.0 1369.0h2.0M2795.1 1363.0h2.0M2365.6 1372.0h3.0M2357.6 1367.0h2.0M2791.8 1380.0h2.0M2695.9 1379.0h2.0M2611.9 1360.0h2.0M2510.1 1373.0h2.0M2682.9 1359.0h3.0M2526.3 1358.0h2.0M2468.0 1379.0h3.0M2510.2 1360.0h3.0M2406.1 1375.0h2.0M2428.7 1360.0h2.0M2617.6 1375.0h2.0M2355.7 1380.0h2.0M2498.0 1383.0h2.0M2123.7 1389.0h3.0M2535.0 1377.0h3.0M2090.8 1381.0h2.0M2560.2 1378.0h3.0M2650.8 1387.0h2.0M2570.9 1384.0h2.0M2438.1 1379.0h2.0M2395.8 1382.0h2.0M2406.6 1384.0h2.0M2223.0 1385.0h2.0M2229.0 1385.0h2.0M2238.0 1385.0h2.0M2247.0 1385.0h2.0M2580.0 1555.0h2.0M2589.0 1555.0h2.0M2592.0 1555.0h2.0M2595.0 1555.0h2.0M2598.0 1555.0h2.0M2601.0 1555.0h2.0M2607.0 1555.0h2.0M2619.0 1555.0h2.0M2622.0 1555.0h2.0M2625.0 1555.0h2.0M2628.0 1555.0h2.0M2631.0 1555.0h2.0M2634.0 1555.0h2.0M2643.0 1555.0h2.0M2649.0 1555.0h2.0M2029.0 1781.0h2.0M2029.0 1800.0h2.0M2089.0 1710.0h2.0M2089.0 1744.0h2.0M2089.0 1765.0h2.0M2089.0 1779.0h2.0M2089.0 1799.0h2.0M2089.0 1812.0h2.0M2089.0 1821.0h2.0M2129.0 1730.0h2.0M2129.0 1807.0h2.0M2129.0 1820.0h2.0M2149.0 1737.0h2.0M2149.0 1763.0h2.0M2149.0 1797.0h2.0M2149.0 1818.0h2.0M2149.0 1838.0h2.0M2189.0 1730.0h2.0M2189.0 1744.0h2.0M2189.0 1789.0h2.0M2189.0 1808.0h2.0M2189.0 1819.0h2.0M2399.0 1750.0h2.0M2399.0 1776.0h2.0M2399.0 1807.0h2.0M2439.0 1767.0h2.0M2499.0 1788.0h2.0M2499.0 1822.0h2.0M2559.0 1750.0h2.0M2559.0 1782.0h2.0M2559.0 1799.0h2.0M2559.0 1823.0h2.0M2599.0 1750.0h2.0M2599.0 1771.0h2.0M2599.0 1789.0h2.0M2599.0 1827.0h2.0M2619.0 1750.0h2.0M2659.0 1778.0h2.0M2659.0 1822.0h2.0M2719.0 1809.0h2.0M2759.0 1750.0h2.0M2759.0 1773.0h2.0M2759.0 1790.0h2.0M2759.0 1830.0h2.0M2779.0 1790.0h2.0M2779.0 1816.0h2.0M2799.0 1750.0h2.0M2799.0 1777.0h2.0M2799.0 1809.0h2.0M2799.0 1834.0h2.0M2060.2 1725.0h2.0M2117.4 1752.0h3.0M2397.1 1795.0h2.0M2321.1 1775.0h3.0M2175.1 1777.0h2.0M2293.8 1761.0h2.0M2394.1 1762.0h3.0M2264.5 1795.0h2.0M2069.8 1776.0h2.0M2316.0 1733.0h2.0M2076.8 1771.0h2.0M2319.1 1755.0h2.0M2114.4 1733.0h2.0M2187.6 1802.0h2.0M2170.5 1738.0h2.0M2052.2 1773.0h2.0M2064.2 1778.0h2.0M2150.6 1734.0h2.0M2125.0 1785.0h2.0M2030.3 1766.0h2.0M2325.1 1745.0h2.0M2202.3 1726.0h2.0M2087.1 1769.0h2.0M2094.0 1732.0h2.0M2338.0 1746.0h2.0M2322.9 1790.0h2.0M2364.4 1788.0h2.0M2228.9 1803.0h2.0M2140.5 1789.0h2.0M2043.8 1755.0h3.0M2210.3 1775.0h2.0M2051.1 1750.0h2.0M2359.4 1807.0h2.0M2226.8 1744.0h2.0M2149.0 1768.0h2.0M2189.0 1768.0h3.0M2399.0 1768.0h2.0M2599.0 1768.0h2.0M2719.0 1768.0h3.0M2259.0 1768.0h2.0M2253.0 1948.0h2.0M2259.0 1948.0h2.0M2262.0 1948.0h2.0M2265.0 1948.0h2.0M2268.0 1948.0h2.0M2412.0 1946.0h2.0M2415.0 1946.0h2.0M2418.0 1946.0h2.0M2424.0 1946.0h2.0M2436.0 1946.0h2.0M2442.0 1946.0h2.0M2445.0 1946.0h2.0M2609.0 1947.0h2.0M2612.0 1947.0h2.0M2615.0 1947.0h2.0M2618.0 1947.0h2.0M2621.0 1947.0h2.0M2029.0 2144.0h2.0M2029.0 2147.0h2.0M2029.0 2155.0h2.0M2029.0 2174.0h2.0M2029.0 2192.0h2.0M2089.0 2139.0h2.0M2089.0 2159.0h2.0M2089.0 2182.0h2.0M2129.0 2151.0h2.0M2129.0 2182.0h2.0M2149.0 2139.0h2.0M2149.0 2142.0h2.0M2149.0 2147.0h2.0M2149.0 2158.0h2.0M2149.0 2173.0h2.0M2149.0 2191.0h2.0M2189.0 2143.0h2.0M2189.0 2149.0h2.0M2189.0 2157.0h2.0M2189.0 2163.0h2.0M2189.0 2183.0h2.0M2189.0 2197.0h2.0M2559.0 2139.0h2.0M2559.0 2143.0h2.0M2559.0 2150.0h2.0M2559.0 2169.0h2.0M2559.0 2174.0h2.0M2559.0 2192.0h2.0M2559.0 2199.0h2.0M2599.0 2139.0h2.0M2599.0 2148.0h2.0M2599.0 2156.0h2.0M2599.0 2162.0h2.0M2599.0 2167.0h2.0M2599.0 2193.0h2.0M2619.0 2139.0h2.0M2619.0 2146.0h2.0M2619.0 2170.0h2.0M2619.0 2176.0h2.0M2619.0 2184.0h2.0M2619.0 2198.0h2.0M2659.0 2139.0h2.0M2659.0 2147.0h2.0M2659.0 2153.0h2.0M2659.0 2182.0h2.0M2659.0 2185.0h2.0M2659.0 2193.0h2.0M2659.0 2199.0h2.0M2719.0 2139.0h2.0M2719.0 2144.0h2.0M2719.0 2148.0h2.0M2719.0 2158.0h2.0M2719.0 2165.0h2.0M2719.0 2193.0h2.0M2759.0 2139.0h2.0M2759.0 2147.0h2.0M2759.0 2153.0h2.0M2759.0 2185.0h2.0M2779.0 2139.0h2.0M2779.0 2149.0h2.0M2779.0 2177.0h2.0M2779.0 2198.0h2.0M2799.0 2180.0h2.0M2799.0 2191.0h2.0M2590.0 2126.0h2.0M2593.0 2126.0h2.0M2599.0 2126.0h2.0M2602.0 2126.0h2.0M2605.0 2126.0h2.0M2608.0 2126.0h2.0M2611.0 2126.0h2.0M2623.0 2126.0h2.0M2629.0 2126.0h2.0M2632.0 2126.0h2.0M2635.0 2126.0h2.0M2638.0 2126.0h2.0M2641.0 2126.0h2.0M2644.0 2126.0h2.0M2650.0 2126.0h2.0M2653.0 2126.0h2.0M2656.0 2126.0h2.0M2590.0 2130.0h2.0M2596.0 2130.0h2.0M2599.0 2130.0h2.0M2602.0 2130.0h2.0M2608.0 2130.0h2.0M2611.0 2130.0h2.0M2614.0 2130.0h2.0M2617.0 2130.0h2.0M2620.0 2130.0h2.0M2623.0 2130.0h2.0M2626.0 2130.0h2.0M2629.0 2130.0h2.0M2638.0 2130.0h2.0M2641.0 2130.0h2.0M2647.0 2130.0h2.0M2650.0 2130.0h2.0M2653.0 2130.0h2.0M2656.0 2130.0h2.0M2659.0 2130.0h2.0M2593.0 2134.0h2.0M2599.0 2134.0h2.0M2602.0 2134.0h2.0M2605.0 2134.0h2.0M2608.0 2134.0h2.0M2611.0 2134.0h2.0M2614.0 2134.0h2.0M2617.0 2134.0h2.0M2623.0 2134.0h2.0M2635.0 2134.0h2.0M2638.0 2134.0h2.0M2641.0 2134.0h2.0M2644.0 2134.0h2.0M2647.0 2134.0h2.0M2650.0 2134.0h2.0M2656.0 2134.0h2.0M2590.0 2138.0h2.0M2593.0 2138.0h2.0M2596.0 2138.0h2.0M2602.0 2138.0h2.0M2605.0 2138.0h2.0M2608.0 2138.0h2.0M2614.0 2138.0h2.0M2617.0 2138.0h2.0M2629.0 2138.0h2.0M2632.0 2138.0h2.0M2641.0 2138.0h2.0M2650.0 2138.0h2.0M2653.0 2138.0h2.0M2659.0 2138.0h2.0M2620.0 2142.0h2.0M2623.0 2142.0h2.0M2629.0 2142.0h2.0M2632.0 2142.0h2.0M2635.0 2142.0h2.0M2638.0 2142.0h2.0M2641.0 2142.0h2.0M2647.0 2142.0h2.0M2650.0 2142.0h2.0M2653.0 2142.0h2.0M2656.0 2142.0h2.0M2620.0 2146.0h2.0M2623.0 2146.0h2.0M2626.0 2146.0h2.0M2629.0 2146.0h2.0M2632.0 2146.0h2.0M2635.0 2146.0h2.0M2638.0 2146.0h2.0M2641.0 2146.0h2.0M2644.0 2146.0h2.0M2650.0 2146.0h2.0M2656.0 2146.0h2.0M2659.0 2146.0h2.0M2559.0 2212.0h2.0M2659.0 2212.0h2.0M2058.0 2230.0h2.0M2189.0 2230.0h2.0M2459.0 2230.0h2.0M2335.2 2237.0h3.0M2382.0 2235.0h2.0M2334.4 2237.0h2.0M2409.6 2230.0h2.0M2397.5 2241.0h3.0M2294.0 2231.0h2.0M2389.2 2232.0h2.0M2449.1 2232.0h3.0M2352.1 2241.0h3.0M2310.2 2242.0h3.0M2447.9 2233.0h3.0M2347.1 2237.0h2.0M2314.6 2239.0h2.0M2417.0 2242.0h2.0M2290.2 2233.0h2.0M2298.1 2238.0h2.0M2411.5 2240.0h2.0M2348.0 2241.0h2.0M2339.4 2231.0h2.0M2455.0 2239.0h2.0M2438.2 2234.0h2.0M2099.0 2242.0h2.0M2159.0 2242.0h2.0M2659.0 2242.0h2.0M2750.0 2367.0h2.0M2579.3 677.0h2.0M2704.3 482.0h2.0M2464.4 845.0h2.0M2159.0 301.0h2.0M2574.7 458.0h2.0M2778.8 101.0h2.0M2578.5 503.0h2.0M2421.0 242.0h2.0M2240.8 661.0h3.0M2477.1 785.0h2.0M2645.9 797.0h2.0M2766.4 620.0h3.0M2103.9 548.0h2.0M2784.6 152.0h2.0M2231.7 129.0h2.0M2271.9 2622.0h2.0M2531.3 2479.0h2.0M2058.7 2516.0h2.0M2545.7 2656.0h2.0M2461.9 2457.0h2.0M2440.6 2393.0h2.0M2610.7 2668.0h2.0M2035.6 2539.0h2.0M2179.8 2852.0h2.0M2645.4 2775.0h2.0M2140.5 2628.0h3.0M2531.9 2432.0h2.0M2789.2 2718.0h3.0M2474.7 2687.0h2.0M2711.6 2561.0h2.0M2763.4 2774.0h2.0M2232.2 2495.0h3.0M2465.3 2788.0h2.0M2391.9 2521.0h3.0M2269.3 2649.0h2.0M2787.1 2677.0h2.0M2392.6 2081.0h2.0M2243.8 1997.0h2.0M2143.4 2058.0h3.0M2730.0 2014.0h3.0M2016.9 2032.0h2.0M2604.2 2095.0h2.0M2682.0 1997.0h2.0M2340.7 1982.0h3.0M2686.4 2059.0h2.0M2304.7 2069.0h2.0M2146.1 2088.0h2.0M2460.3 2117.0h3.0"/>
<path stroke="#0b1878" stroke-width="1.8" fill="none" d="M2099.0 70.0h2.0M2099.0 325.0h2.0M2099.0 468.0h2.0M2099.0 1186.0h2.0M2099.0 1368.0h2.0M2099.0 1431.0h2.0M2099.0 1722.0h2.0M2099.0 1782.0h2.0M2099.0 1874.0h2.0M2099.0 1938.0h2.0M2099.0 2694.0h2.0M2179.0 306.0h2.0M2179.0 579.0h2.0M2179.0 1188.0h2.0M2179.0 1372.0h2.0M2179.0 1553.0h2.0M2179.0 1742.0h2.0M2179.0 1940.0h2.0M2179.0 2087.0h2.0M2179.0 2808.0h2.0M2514.4 936.0h2.0M2738.4 934.0h3.0M2344.0 930.0h2.0M2293.7 947.0h2.0M2123.7 933.0h2.0M2785.3 936.0h2.0M2388.0 950.0h2.0M2407.2 944.0h2.0M2099.1 958.0h2.0M2145.9 962.0h2.0M2144.8 959.0h2.0M2582.4 955.0h2.0M2139.7 951.0h2.0M2236.4 953.0h2.0M2215.5 952.0h2.0M2497.6 956.0h3.0M2800.0 989.0h2.0M2678.3 989.0h2.0M2652.9 981.0h2.0M2350.7 978.0h2.0M2209.9 976.0h2.0M2319.0 1035.0h3.0M2323.0 1035.0h3.0M2327.0 1035.0h3.0M2331.0 1035.0h3.0M2335.0 1035.0h3.0M2339.0 1035.0h3.0M2347.0 1035.0h3.0M2545.0 1035.0h3.0M2549.0 1035.0h3.0M2561.0 1035.0h3.0M2569.0 1035.0h3.0M2573.0 1035.0h3.0M2581.0 1035.0h3.0M2593.0 1035.0h3.0M2597.0 1035.0h3.0M2150.0 1226.0h3.0M2154.0 1226.0h3.0M2158.0 1226.0h3.0M2166.0 1226.0h3.0M2170.0 1226.0h3.0M2174.0 1226.0h3.0M2178.0 1226.0h3.0M2182.0 1226.0h3.0M2186.0 1226.0h3.0M2194.0 1226.0h3.0M2198.0 1226.0h3.0M2154.0 1234.0h3.0M2158.0 1234.0h3.0M2162.0 1234.0h3.0M2166.0 1234.0h3.0M2170.0 1234.0h3.0M2178.0 1234.0h3.0M2186.0 1234.0h3.0M2647.0 1184.0h3.0M2667.0 1184.0h3.0M2675.0 1184.0h3.0M2679.0 1184.0h3.0M2687.0 1184.0h3.0M2691.0 1184.0h3.0M2695.0 1184.0h3.0M2699.0 1184.0h3.0M2703.0 1184.0h3.0M2707.0 1184.0h3.0M2711.0 1184.0h3.0M2715.0 1184.0h3.0M2719.0 1184.0h3.0M2727.0 1184.0h3.0M2731.0 1184.0h3.0M2735.0 1184.0h3.0M2739.0 1184.0h3.0M2747.0 1184.0h3.0M2755.0 1184.0h3.0M2550.0 1328.0h3.0M2554.0 1328.0h3.0M2562.0 1328.0h3.0M2570.0 1328.0h3.0M2574.0 1328.0h3.0M2578.0 1328.0h3.0M2582.0 1328.0h3.0M2594.0 1328.0h3.0M2598.0 1328.0h3.0M2602.0 1328.0h3.0M2614.0 1328.0h3.0M2638.0 1328.0h3.0M2642.0 1328.0h3.0M2654.0 1328.0h3.0M2658.0 1328.0h3.0M2054.3 1343.0h3.0M2016.6 1134.0h2.0M2041.3 1215.0h2.0M2112.8 1173.0h2.0M2042.1 1340.0h3.0M2455.7 1375.0h2.0M2377.7 1366.0h2.0M2688.7 1360.0h2.0M2679.7 1363.0h3.0M2551.6 1362.0h2.0M2450.5 1369.0h3.0M2499.9 1379.0h2.0M2764.8 1383.0h3.0M2128.5 1390.0h2.0M2656.6 1387.0h2.0M2542.6 1378.0h3.0M2541.3 1388.0h2.0M2184.4 1388.0h2.0M2376.5 1389.0h3.0M2584.0 1531.0h2.0M2587.0 1531.0h2.0M2590.0 1531.0h2.0M2596.0 1531.0h2.0M2599.0 1531.0h2.0M2605.0 1531.0h2.0M2608.0 1531.0h2.0M2614.0 1531.0h2.0M2620.0 1531.0h2.0M2626.0 1531.0h2.0M2632.0 1531.0h2.0M2635.0 1531.0h2.0M2638.0 1531.0h2.0M2647.0 1531.0h2.0M2588.0 1541.0h2.0M2591.0 1541.0h2.0M2594.0 1541.0h2.0M2606.0 1541.0h2.0M2615.0 1541.0h2.0M2618.0 1541.0h2.0M2627.0 1541.0h2.0M2630.0 1541.0h2.0M2660.0 1541.0h2.0M2116.2 1794.0h3.0M2196.4 1736.0h2.0M2340.1 1721.0h3.0M2339.8 1781.0h2.0M2304.7 1725.0h2.0M2287.5 1799.0h2.0M2327.4 1764.0h3.0M2349.0 1768.0h3.0M2225.0 1745.0h2.0M2228.0 1745.0h2.0M2231.0 1745.0h2.0M2234.0 1745.0h2.0M2240.0 1745.0h2.0M2243.0 1745.0h2.0M2311.0 1920.0h2.0M2314.0 1920.0h2.0M2317.0 1920.0h2.0M2320.0 1920.0h2.0M2323.0 1920.0h2.0M2326.0 1920.0h2.0M2329.0 1920.0h2.0M2332.0 1920.0h2.0M2335.0 1920.0h2.0M2338.0 1920.0h2.0M2344.0 1920.0h2.0M2347.0 1920.0h2.0M2018.0 1931.0h6.0M2353.0 1944.0h2.0M2359.0 1944.0h2.0M2365.0 1944.0h2.0M2368.0 1944.0h2.0M2377.0 1944.0h2.0M2383.0 1944.0h2.0M2520.0 1948.0h2.0M2523.0 1948.0h2.0M2526.0 1948.0h2.0M2532.0 1948.0h2.0M2535.0 1948.0h2.0M2538.0 1948.0h2.0M2541.0 1948.0h2.0M2544.0 1948.0h2.0M2547.0 1948.0h2.0M2590.0 2124.0h2.0M2593.0 2124.0h2.0M2596.0 2124.0h2.0M2599.0 2124.0h2.0M2602.0 2124.0h2.0M2605.0 2124.0h2.0M2608.0 2124.0h2.0M2611.0 2124.0h2.0M2614.0 2124.0h2.0M2617.0 2124.0h2.0M2620.0 2124.0h2.0M2623.0 2124.0h2.0M2632.0 2124.0h2.0M2635.0 2124.0h2.0M2638.0 2124.0h2.0M2641.0 2124.0h2.0M2644.0 2124.0h2.0M2647.0 2124.0h2.0M2653.0 2124.0h2.0M2656.0 2124.0h2.0M2590.0 2128.0h2.0M2593.0 2128.0h2.0M2596.0 2128.0h2.0M2599.0 2128.0h2.0M2605.0 2128.0h2.0M2608.0 2128.0h2.0M2611.0 2128.0h2.0M2617.0 2128.0h2.0M2620.0 2128.0h2.0M2626.0 2128.0h2.0M2632.0 2128.0h2.0M2635.0 2128.0h2.0M2641.0 2128.0h2.0M2644.0 2128.0h2.0M2650.0 2128.0h2.0M2653.0 2128.0h2.0M2656.0 2128.0h2.0M2590.0 2132.0h2.0M2593.0 2132.0h2.0M2596.0 2132.0h2.0M2599.0 2132.0h2.0M2602.0 2132.0h2.0M2605.0 2132.0h2.0M2608.0 2132.0h2.0M2611.0 2132.0h2.0M2614.0 2132.0h2.0M2617.0 2132.0h2.0M2623.0 2132.0h2.0M2626.0 2132.0h2.0M2629.0 2132.0h2.0M2632.0 2132.0h2.0M2635.0 2132.0h2.0M2638.0 2132.0h2.0M2644.0 2132.0h2.0M2650.0 2132.0h2.0M2653.0 2132.0h2.0M2656.0 2132.0h2.0M2659.0 2132.0h2.0M2590.0 2136.0h2.0M2593.0 2136.0h2.0M2599.0 2136.0h2.0M2602.0 2136.0h2.0M2608.0 2136.0h2.0M2614.0 2136.0h2.0M2620.0 2136.0h2.0M2623.0 2136.0h2.0M2626.0 2136.0h2.0M2629.0 2136.0h2.0M2644.0 2136.0h2.0M2647.0 2136.0h2.0M2650.0 2136.0h2.0M2653.0 2136.0h2.0M2656.0 2136.0h2.0M2593.0 2140.0h2.0M2596.0 2140.0h2.0M2599.0 2140.0h2.0M2602.0 2140.0h2.0M2605.0 2140.0h2.0M2608.0 2140.0h2.0M2611.0 2140.0h2.0M2614.0 2140.0h2.0M2617.0 2140.0h2.0M2620.0 2140.0h2.0M2626.0 2140.0h2.0M2629.0 2140.0h2.0M2635.0 2140.0h2.0M2638.0 2140.0h2.0M2644.0 2140.0h2.0M2647.0 2140.0h2.0M2650.0 2140.0h2.0M2653.0 2140.0h2.0M2659.0 2140.0h2.0M2620.0 2144.0h2.0M2623.0 2144.0h2.0M2626.0 2144.0h2.0M2629.0 2144.0h2.0M2638.0 2144.0h2.0M2641.0 2144.0h2.0M2644.0 2144.0h2.0M2656.0 2144.0h2.0M2659.0 2144.0h2.0M2620.0 2148.0h2.0M2623.0 2148.0h2.0M2635.0 2148.0h2.0M2638.0 2148.0h2.0M2641.0 2148.0h2.0M2644.0 2148.0h2.0M2647.0 2148.0h2.0M2650.0 2148.0h2.0M2653.0 2148.0h2.0M2656.0 2148.0h2.0M2659.0 2148.0h2.0M2571.0 2148.0h2.0M2367.3 2239.0h2.0M2304.8 2234.0h2.0M2415.2 2234.0h2.0M2446.3 2237.0h2.0M2576.9 384.0h3.0M2533.4 578.0h2.0M2157.4 655.0h2.0M2560.4 433.0h2.0M2399.3 370.0h2.0M2414.4 412.0h3.0M2513.3 309.0h2.0M2115.2 277.0h2.0M2201.7 567.0h2.0M2337.5 541.0h2.0M2546.0 103.0h2.0M2691.5 766.0h2.0M2353.8 548.0h2.0M2314.3 640.0h2.0M2758.3 2766.0h2.0M2749.6 2740.0h2.0M2747.4 2415.0h2.0M2691.9 2538.0h2.0M2337.4 2705.0h2.0M2023.0 2473.0h2.0M2342.7 2424.0h2.0M2067.7 2389.0h2.0M2468.5 2647.0h2.0M2314.5 2664.0h2.0M2700.6 2682.0h2.0M2560.7 2591.0h2.0M2371.9 2725.0h2.0M2724.8 2109.0h2.0M2090.2 2108.0h2.0M2782.2 2029.0h2.0M2520.7 2042.0h2.0M2694.2 2033.0h2.0M2722.3 2010.0h2.0M2634.7 2111.0h2.0M2500.9 2090.0h2.0M2776.2 2082.0h2.0"/>
</svg>
<div class="hl" style="top:3022.70px"></div><div class="tl" style="top:3012px">0:00</div>
<div class="hl" style="top:2901.70px"></div><div class="tl" style="top:2891px">1:00</div>
<div class="hl" style="top:2780.70px"></div><div class="tl" style="top:2770px">2:00</div>
<div class="hl" style="top:2659.70px"></div><div class="tl" style="top:2649px">3:00</div>
<div class="hl" style="top:2538.70px"></div><div class="tl" style="top:2528px">4:00</div>
<div class="hl" style="top:2417.70px"></div><div class="tl" style="top:2407px">5:00</div>
<div class="hl" style="top:2296.70px"></div><div class="tl" style="top:2286px">6:00</div>
<div class="hl" style="top:2175.70px"></div><div class="tl" style="top:2165px">7:00</div>
<div class="hl" style="top:2054.70px"></div><div class="tl" style="top:2044px">8:00</div>
<div class="hl" style="top:1933.70px"></div><div class="tl" style="top:1923px">9:00</div>
<div class="hl" style="top:1812.70px"></div><div class="tl" style="top:1802px">10:00</div>
<div class="hl" style="top:1691.70px"></div><div class="tl" style="top:1681px">11:00</div>
<div class="hl" style="top:1570.70px"></div><div class="tl" style="top:1560px">12:00</div>
<div class="hl" style="top:1449.70px"></div><div class="tl" style="top:1439px">13:00</div>
<div class="hl" style="top:1328.70px"></div><div class="tl" style="top:1318px">14:00</div>
<div class="hl" style="top:1207.70px"></div><div class="tl" style="top:1197px">15:00</div>
<div class="hl" style="top:1086.70px"></div><div class="tl" style="top:1076px">16:00</div>
<div class="hl" style="top:965.70px"></div><div class="tl" style="top:955px">17:00</div>
<div class="hl" style="top:844.70px"></div><div class="tl" style="top:834px">18:00</div>
<div class="hl" style="top:723.70px"></div><div class="tl" style="top:713px">19:00</div>
<div class="hl" style="top:602.70px"></div><div class="tl" style="top:592px">20:00</div>
<div class="hl" style="top:481.70px"></div><div class="tl" style="top:471px">21:00</div>
<div class="hl" style="top:360.70px"></div><div class="tl" style="top:350px">22:00</div>
<div class="hl" style="top:239.70px"></div><div class="tl" style="top:229px">23:00</div>
<div class="hl" style="top:118.70px"></div><div class="tl" style="top:108px">24:00</div>
<div class="abs g" style="left:100px;top:3031px;font-size:20.5px;letter-spacing:0.17px;line-height:24px;white-space:nowrap">https://doi.org/10.5880/GFZ.1.2.2024.003</div>
<div class="abs g" style="left:1300px;width:600px;text-align:center;top:3032.3px;font-size:20.5px;letter-spacing:0.1px;line-height:24px;white-space:nowrap">1_2200_2500_10000_40_0</div>
<div class="abs g" style="right:10px;top:3035.3px;font-size:20.5px;letter-spacing:0.42px;line-height:24px;white-space:nowrap">2025-07-28</div>
</body></html>
